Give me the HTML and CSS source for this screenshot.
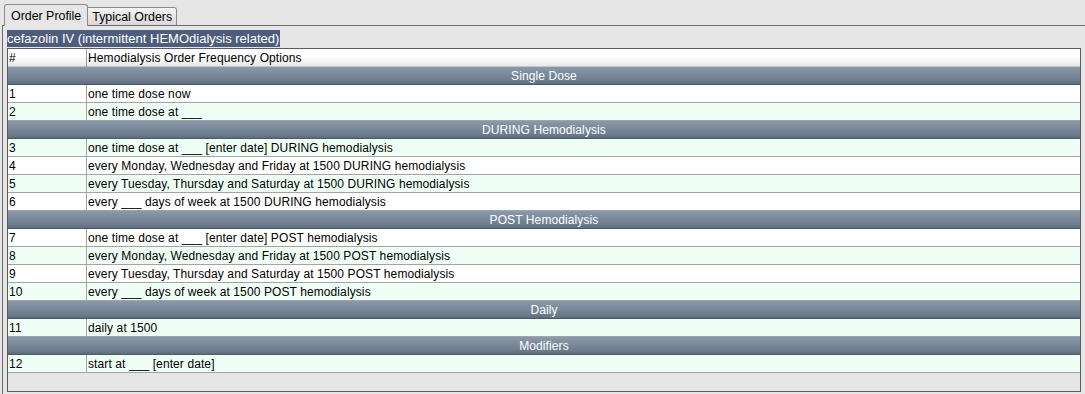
FILE: index.html
```html
<!DOCTYPE html>
<html lang="en">
<head>
    <meta charset="UTF-8" />
    <title>Order Profile</title>
    <link rel="stylesheet" href="styles.css">
</head>
<body>
    <div class="tabs">
        <div class="tab selected">Order Profile</div>
        <div class="tab">Typical Orders</div>
    </div>

    <div class="panel">
        <div class="title"><span>cefazolin IV (intermittent HEMOdialysis related)</span></div>

        <div class="pane">
            <div class="row head">
                <div class="num">#</div>
                <div class="txt">Hemodialysis Order Frequency Options</div>
            </div>

            <div class="group">Single Dose</div>
            <div class="row"><div class="num">1</div><div class="txt">one time dose now</div></div>
            <div class="row alt"><div class="num">2</div><div class="txt">one time dose at ___</div></div>

            <div class="group">DURING Hemodialysis</div>
            <div class="row alt"><div class="num">3</div><div class="txt">one time dose at ___ [enter date] DURING hemodialysis</div></div>
            <div class="row"><div class="num">4</div><div class="txt">every Monday, Wednesday and Friday at 1500 DURING hemodialysis</div></div>
            <div class="row alt"><div class="num">5</div><div class="txt">every Tuesday, Thursday and Saturday at 1500 DURING hemodialysis</div></div>
            <div class="row"><div class="num">6</div><div class="txt">every ___ days of week at 1500 DURING hemodialysis</div></div>

            <div class="group">POST Hemodialysis</div>
            <div class="row"><div class="num">7</div><div class="txt">one time dose at ___ [enter date] POST hemodialysis</div></div>
            <div class="row alt"><div class="num">8</div><div class="txt">every Monday, Wednesday and Friday at 1500 POST hemodialysis</div></div>
            <div class="row"><div class="num">9</div><div class="txt">every Tuesday, Thursday and Saturday at 1500 POST hemodialysis</div></div>
            <div class="row alt"><div class="num">10</div><div class="txt">every ___ days of week at 1500 POST hemodialysis</div></div>

            <div class="group">Daily</div>
            <div class="row alt"><div class="num">11</div><div class="txt">daily at 1500</div></div>

            <div class="group">Modifiers</div>
            <div class="row alt"><div class="num">12</div><div class="txt">start at ___ [enter date]</div></div>
        </div>
    </div>
</body>
</html>
```

FILE: styles.css
```css
body {
    margin: 0;
    background: #e6e6e6;
    font-family: "Liberation Sans", Arial, sans-serif;
    font-size: 12px;
    color: #000;
    height: 394px;
    overflow: hidden;
}
.tabs {
    display: flex;
    align-items: flex-end;
    height: 26px;
    padding-left: 4px;
    margin-bottom: -1px;
    position: relative;
    font-size: 12.4px;
}
.tab {
    height: 17px;
    line-height: 18px;
    padding: 0 4px 0 4px;
    border: 1px solid #8c8c8c;
    border-bottom: none;
    border-left: none;
    border-radius: 0 3px 0 0;
    background: linear-gradient(to bottom, #f4f4f4, #d9d9d9);
    margin-bottom: 1px;
}
.tab.selected {
    height: 21px;
    line-height: 22px;
    padding: 0 6px 0 6px;
    border-left: 1px solid #8c8c8c;
    border-radius: 3px 3px 0 0;
    background: #e6e6e6;
    margin-bottom: 0;
}
.panel {
    margin-left: 2px;
    border-top: 1px solid #6b6b6b;
    border-left: 1px solid #6b6b6b;
    padding: 4px 0 0 4px;
    height: 364px;
}
.title {
    height: 18px;
    line-height: 17px;
    font-size: 13px;
}
.title span {
    display: inline-block;
    height: 17px;
    background: #4f5d7d;
    color: #fff;
    padding: 0 1px 0 0;
}
.pane {
    width: 1072px;
    height: 342px;
    border: 1px solid #5c5c5c;
    background: #e6e6e6;
    letter-spacing: 0.1px;
}
.row {
    display: grid;
    grid-template-columns: 79px 1fr;
    height: 17px;
    line-height: 18px;
    border-bottom: 1px solid #a3a3a3;
    background: #fff;
}
.row.alt {
    background: #f0fff6;
}
.row.head {
    background: linear-gradient(to bottom, #ffffff 40%, #e9e9e9);
    border-bottom: 1px solid #c4c4c4;
}
.num {
    padding-left: 1px;
    border-right: 1px solid #a3a3a3;
}
.head .num {
    border-right: 1px solid #9a9a9a;
}
.txt {
    padding-left: 1px;
}
.group {
    height: 17px;
    line-height: 18px;
    text-align: center;
    color: #fff;
    background: linear-gradient(to bottom, #8b9aab, #6c7c8c 80%, #5d6c7c);
    border-bottom: 1px solid #4c5a68;
}
```
